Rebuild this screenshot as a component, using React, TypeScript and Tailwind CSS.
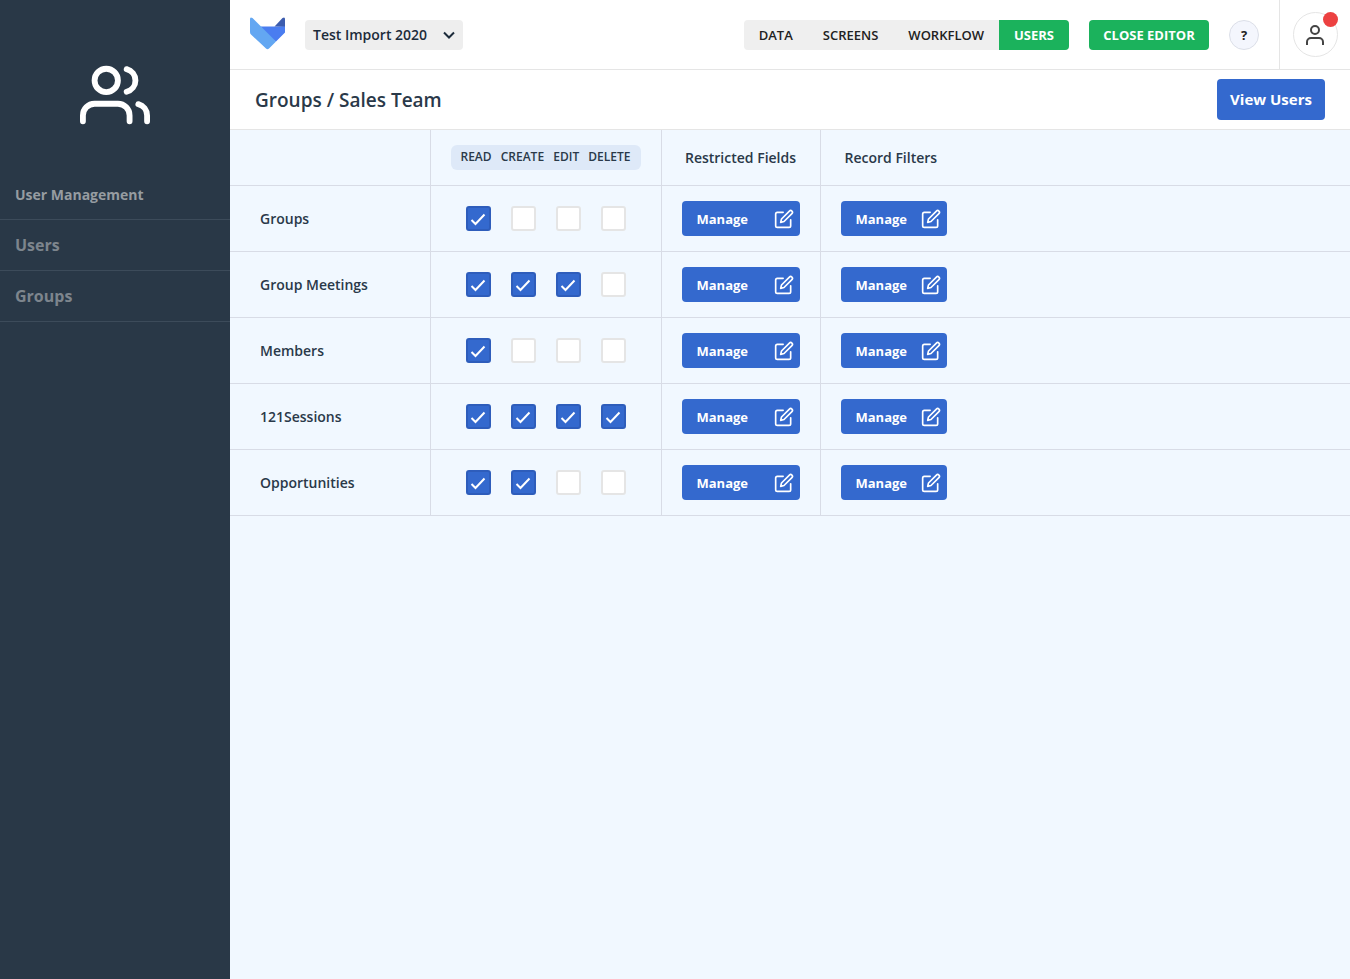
import { useState } from "react";

type Row = { name: string; rights: boolean[] };

const rights = ["READ", "CREATE", "EDIT", "DELETE"];

const initialRows: Row[] = [
  { name: "Groups", rights: [true, false, false, false] },
  { name: "Group Meetings", rights: [true, true, true, false] },
  { name: "Members", rights: [true, false, false, false] },
  { name: "121Sessions", rights: [true, true, true, true] },
  { name: "Opportunities", rights: [true, true, false, false] },
];

function Logo() {
  return (
    <svg width="35" height="35" viewBox="0.500 0 35 35" aria-hidden="true">
      <path d="M11 9.500H27L35.500 9V15.500L26.500 24.500L18 20Z" fill="#4a7df0" />
      <path d="M25 9.500L33 1Q35.500 -.5 35.500 2V9.500Z" fill="#3c5cae" />
      <path d="M.5 2Q.5 -.5 3 1L26.500 24.500L19.500 31.500Q18 33 16.500 31.500L1.500 17.500Q.5 16.500 .5 15Z" fill="#63a7f2" />
    </svg>
  );
}

function UsersIcon() {
  return (
    <svg width="70" height="70" viewBox="0 0 24 24" fill="none" stroke="currentColor" strokeWidth="2" strokeLinecap="round" strokeLinejoin="round" aria-hidden="true">
      <path d="M17 21v-2a4 4 0 0 0-4-4H5a4 4 0 0 0-4 4v2" />
      <circle cx="9" cy="7" r="4" />
      <path d="M23 21v-2a4 4 0 0 0-3-3.870" />
      <path d="M16 3.130a4 4 0 0 1 0 7.750" />
    </svg>
  );
}

function UserIcon() {
  return (
    <svg width="24" height="24" viewBox="0 0 24 24" fill="none" stroke="#444" strokeWidth="2" aria-hidden="true">
      <path d="M20 22v-3a4 4 0 0 0-4-4H8a4 4 0 0 0-4 4v3" />
      <circle cx="12" cy="7" r="4" />
    </svg>
  );
}

function EditIcon() {
  return (
    <svg width="20" height="20" viewBox="0 0 24 24" fill="none" stroke="currentColor" strokeWidth="2" strokeLinecap="round" strokeLinejoin="round" aria-hidden="true">
      <path d="M11 4H4a2 2 0 0 0-2 2v14a2 2 0 0 0 2 2h14a2 2 0 0 0 2-2v-7" />
      <path d="M18.500 2.500a2.121 2.121 0 0 1 3 3L12 15l-4 1 1-4z" />
    </svg>
  );
}

function Right({ label, checked, onChange }: { label: string; checked: boolean; onChange: () => void }) {
  return (
    <label className="grid size-[25px] cursor-pointer">
      <input
        type="checkbox"
        aria-label={label}
        checked={checked}
        onChange={onChange}
        className="peer col-start-1 row-start-1 size-[25px] appearance-none rounded-[3px] border-2 border-[#e5e5e5] bg-white checked:border-[#2e5dbb] checked:bg-[#3469ce]"
      />
      <svg viewBox="0 0 25 25" className="pointer-events-none invisible col-start-1 row-start-1 size-[25px] peer-checked:visible" fill="none" stroke="#fff" strokeWidth="2" aria-hidden="true">
        <path d="M5.500 14L9.500 18L18.500 8.500" />
      </svg>
    </label>
  );
}

function Manage({ label }: { label: string }) {
  return (
    <button type="button" aria-label={label} className="flex h-[35px] w-full items-center justify-between rounded-[4px] bg-[#3469ce] pt-px pr-[6px] pl-[15px] text-[13px] leading-[34px] font-bold text-white">
      Manage
      <EditIcon />
    </button>
  );
}

export default function App() {
  const [rows, setRows] = useState(initialRows);
  const toggle = (r: number, c: number) =>
    setRows(rows.map((row, i) => (i === r ? { ...row, rights: row.rights.map((v, j) => (j === c ? !v : v)) } : row)));

  return (
    <div className="flex min-h-screen bg-[#f1f8ff] font-['Open_Sans',sans-serif] text-[#2a3949]">
      <aside className="w-[230px] shrink-0 bg-[#293847] pt-[60px]">
        <div className="flex justify-center text-white">
          <UsersIcon />
        </div>
        <nav aria-label="User Management">
          <h2 className="mt-10 border-b border-[#3c4b5a] px-[15px] pt-[14px] pb-[14px] text-[14px] leading-[21px] font-bold text-[#969ca1]">User Management</h2>
          <a href="#users" className="block border-b border-[#3c4b5a] px-[15px] py-[13px] text-[16px] leading-6 font-bold text-[#7d858d]">Users</a>
          <a href="#groups" className="block border-b border-[#3c4b5a] px-[15px] py-[13px] text-[16px] leading-6 font-bold text-[#7d858d]">Groups</a>
        </nav>
      </aside>

      <div className="min-w-0 flex-1">
        <header className="flex h-[70px] items-center border-b border-[#e5e5e5] bg-white pl-5">
          <Logo />
          <button type="button" className="ml-5 flex h-[30px] w-[158px] items-center justify-between rounded-[4px] bg-[#eee] pr-[7px] pl-2 text-[14px] font-semibold text-[#1c2b3a]">
            Test Import 2020
            <svg width="14" height="14" viewBox="0 0 14 14" fill="none" stroke="currentColor" strokeWidth="2" aria-hidden="true">
              <path d="M2 4.500L7 9.500L12 4.500" />
            </svg>
          </button>

          <nav aria-label="Editor" className="ml-auto flex h-[30px] overflow-hidden rounded-[4px] bg-[#efefef] text-[13px] leading-[30px] font-semibold text-[#222]">
            <a href="#data" className="px-[15px]">DATA</a>
            <a href="#screens" className="px-[15px]">SCREENS</a>
            <a href="#workflow" className="px-[15px]">WORKFLOW</a>
            <a href="#users" aria-current="page" className="bg-[#1bb25c] px-[15px] font-bold text-white">USERS</a>
          </nav>
          <button type="button" className="ml-5 h-[30px] w-[120px] rounded-[4px] bg-[#1bb25c] text-[13px] leading-[30px] font-bold text-white">CLOSE EDITOR</button>
          <button type="button" aria-label="Help" className="ml-5 size-[30px] rounded-full border border-[#dcdfe8] bg-[#f4f6fd] text-[13px] leading-[28px] font-bold text-[#222]">?</button>
          <div className="ml-5 flex h-full items-center border-l border-[#e5e5e5] pr-3 pl-[13px]">
            <button type="button" aria-label="Account" className="relative flex size-[45px] items-center rounded-full border border-[#e5e5e5] pl-[9px]">
              <UserIcon />
              <span className="absolute -top-px -right-px size-[15px] rounded-full bg-[#ec4141]" />
            </button>
          </div>
        </header>

        <div className="flex h-[60px] items-center justify-between border-b border-[#e5e5e5] bg-white px-[25px]">
          <h1 className="text-[19px] leading-[30px] font-semibold">Groups / Sales Team</h1>
          <a href="#view-users" className="h-[41px] w-[108px] rounded-[4px] bg-[#3469ce] text-center text-[15px] leading-[41px] font-bold text-white">View Users</a>
        </div>

        <table className="w-full table-fixed border-collapse text-left text-[14px]">
          <colgroup>
            <col className="w-[200px]" />
            <col className="w-[231px]" />
            <col className="w-[159px]" />
            <col />
          </colgroup>
          <thead>
            <tr className="h-[55px] border-b border-[#d8dce6]">
              <td className="border-r border-[#d8dce6]" />
              <th scope="col" className="border-r border-[#d8dce6] px-5">
                <div className="flex h-[25px] items-center justify-between rounded-[6px] bg-[#dee9f8] px-[10px] text-[12px] font-semibold">
                  {rights.map((r) => (
                    <span key={r}>{r}</span>
                  ))}
                </div>
              </th>
              <th scope="col" className="border-r border-[#d8dce6] text-center font-semibold">Restricted Fields</th>
              <th scope="col" className="pl-6 font-semibold">Record Filters</th>
            </tr>
          </thead>
          <tbody>
            {rows.map((row, r) => (
              <tr key={row.name} className="h-[66px] border-b border-[#d8dce6]">
                <th scope="row" className="border-r border-[#d8dce6] pl-[30px] font-semibold">{row.name}</th>
                <td className="border-r border-[#d8dce6] px-[35px]">
                  <div className="flex justify-between">
                    {row.rights.map((v, c) => (
                      <Right key={rights[c]} label={`${row.name} ${rights[c]}`} checked={v} onChange={() => toggle(r, c)} />
                    ))}
                  </div>
                </td>
                <td className="border-r border-[#d8dce6] px-5">
                  <Manage label={`Manage restricted fields of ${row.name}`} />
                </td>
                <td className="pl-5">
                  <div className="w-[106px]">
                    <Manage label={`Manage record filters of ${row.name}`} />
                  </div>
                </td>
              </tr>
            ))}
          </tbody>
        </table>
      </div>
    </div>
  );
}
